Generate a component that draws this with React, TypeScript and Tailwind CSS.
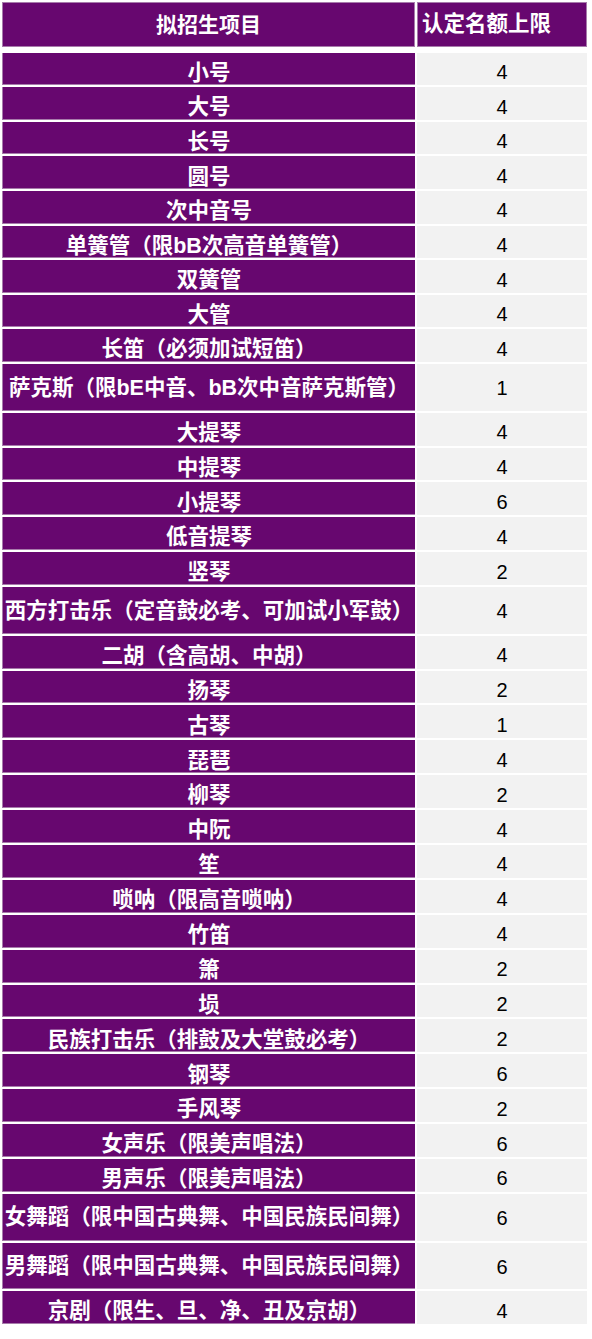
type Row = { name: string; quota: number; tall?: boolean; late?: boolean };

const rows: Row[] = [
  { name: '小号', quota: 4 },
  { name: '大号', quota: 4 },
  { name: '长号', quota: 4 },
  { name: '圆号', quota: 4 },
  { name: '次中音号', quota: 4 },
  { name: '单簧管（限bB次高音单簧管）', quota: 4 },
  { name: '双簧管', quota: 4 },
  { name: '大管', quota: 4 },
  { name: '长笛（必须加试短笛）', quota: 4 },
  { name: '萨克斯（限bE中音、bB次中音萨克斯管）', quota: 1, tall: true },
  { name: '大提琴', quota: 4, late: true },
  { name: '中提琴', quota: 4, late: true },
  { name: '小提琴', quota: 6, late: true },
  { name: '低音提琴', quota: 4, late: true },
  { name: '竖琴', quota: 2, late: true },
  { name: '西方打击乐（定音鼓必考、可加试小军鼓）', quota: 4, tall: true },
  { name: '二胡（含高胡、中胡）', quota: 4, late: true },
  { name: '扬琴', quota: 2, late: true },
  { name: '古琴', quota: 1, late: true },
  { name: '琵琶', quota: 4, late: true },
  { name: '柳琴', quota: 2, late: true },
  { name: '中阮', quota: 4, late: true },
  { name: '笙', quota: 4, late: true },
  { name: '唢呐（限高音唢呐）', quota: 4, late: true },
  { name: '竹笛', quota: 4, late: true },
  { name: '箫', quota: 2, late: true },
  { name: '埙', quota: 2, late: true },
  { name: '民族打击乐（排鼓及大堂鼓必考）', quota: 2, late: true },
  { name: '钢琴', quota: 6, late: true },
  { name: '手风琴', quota: 2, late: true },
  { name: '女声乐（限美声唱法）', quota: 6, late: true },
  { name: '男声乐（限美声唱法）', quota: 6, late: true },
  { name: '女舞蹈（限中国古典舞、中国民族民间舞）', quota: 6, tall: true },
  { name: '男舞蹈（限中国古典舞、中国民族民间舞）', quota: 6, tall: true },
  { name: '京剧（限生、旦、净、丑及京胡）', quota: 4, late: true },
];

const cjk = "font-['Liberation_Sans','Noto_Sans_CJK_SC',sans-serif]";

export default function App() {
  return (
    <div className="w-[592px] min-h-[1339px] bg-white pt-[2px] pl-[2px]">
      {/* header */}
      <div className="flex gap-[2px] h-[44.7px]">
        <div className={`w-[413px] flex items-center justify-center bg-[#67076f] border border-[#a77bab] text-white text-[21px] font-bold ${cjk}`}>
          拟招生项目
        </div>
        <div className={`w-[170px] flex items-center pl-[4px] bg-[#67076f] border border-[#a77bab] text-white text-[21.5px] font-bold whitespace-nowrap ${cjk}`}>
          认定名额上限
        </div>
      </div>

      <div className="mt-[6px] flex flex-col gap-[2px]">
        {rows.map((r) => (
          <div
            key={r.name}
            className={`flex gap-[2px] ${r.tall ? 'h-[46.6px]' : r.late ? 'h-[32.9px]' : 'h-[32.6px]'}`}
          >
            <div
              className={`w-[413px] flex items-center justify-center whitespace-nowrap bg-[#67076f] border-b border-l border-[#a77bab] text-white text-[21.5px] font-bold leading-none ${cjk} ${r.tall ? 'pt-[3px]' : 'pt-[10px]'}`}
            >
              {r.name}
            </div>
            <div
              className={`w-[170px] flex items-center justify-center bg-[#f2f2f2] text-black text-[20px] leading-none font-['Liberation_Sans',sans-serif] ${r.tall ? 'pt-[2px]' : 'pt-[6px]'}`}
            >
              {r.quota}
            </div>
          </div>
        ))}
      </div>
    </div>
  );
}
